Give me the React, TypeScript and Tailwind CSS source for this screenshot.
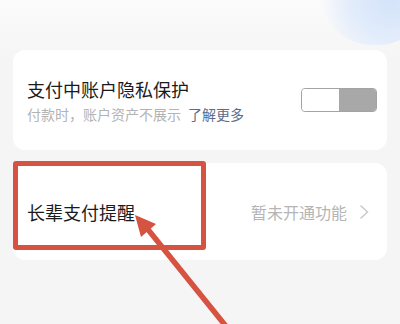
export default function App() {
  return (
    <div
      className="relative w-[400px] h-[324px] overflow-hidden bg-[#f5f5f5]"
      style={{ fontFamily: '"Noto Sans CJK SC", "Noto Sans", sans-serif' }}
    >
      <div className="absolute inset-x-0 top-0 h-[60px] bg-gradient-to-b from-[#fbfbfc] to-[#f5f5f5]" />
      <div className="absolute -right-[30px] -top-[60px] w-[110px] h-[105px] rounded-full bg-[radial-gradient(circle_at_65%_55%,#d3e3f9_0,#e2ecfb_45%,rgba(244,247,252,0)_78%)]" />

      <div className="relative flex flex-col gap-[13px] pt-[50px] px-[13px]">
        <div className="flex items-center justify-between h-[100px] rounded-[12px] bg-white pl-[14px] pr-[10px]">
          <div className="flex flex-col">
            <span className="text-[18px] leading-[26px] text-[#1b1b1b]">支付中账户隐私保护</span>
            <span className="mt-[2px] text-[14px] leading-[20px] text-[#b3b3b3]">
              付款时，账户资产不展示<span className="ml-[7px] text-[#5e6b88]">了解更多</span>
            </span>
          </div>
          <div className="flex w-[76px] h-[24px] rounded-[4px] overflow-hidden border-[1.5px] border-[#a3a3a3]">
            <div className="flex-1 bg-white rounded-[3px]" />
            <div className="flex-1 bg-[#a8a8a8]" />
          </div>
        </div>

        <div className="flex items-center justify-between h-[97px] rounded-[12px] bg-white pl-[14px] pr-[18px]">
          <span className="text-[18px] leading-[26px] text-[#1b1b1b]">长辈支付提醒</span>
          <div className="flex items-center gap-[12px]">
            <span className="text-[16px] text-[#b5b5b5]">暂未开通功能</span>
            <svg width="10" height="16" viewBox="0 0 10 16" fill="none">
              <path d="M1.5 1.5 L8.5 8 L1.5 14.5" stroke="#c8c8c8" strokeWidth="1.4" />
            </svg>
          </div>
        </div>
      </div>

      <div className="absolute left-[13px] top-[161px] w-[193px] h-[89px] border-[5px] border-[#d65241] rounded-[3px]" />
      <svg className="absolute inset-0" width="400" height="324" viewBox="0 0 400 324">
        <line x1="229" y1="330" x2="146" y2="227" stroke="#d65241" strokeWidth="5.5" />
        <polygon points="135,215 156,224 141,237" fill="#d65241" />
      </svg>
    </div>
  );
}
